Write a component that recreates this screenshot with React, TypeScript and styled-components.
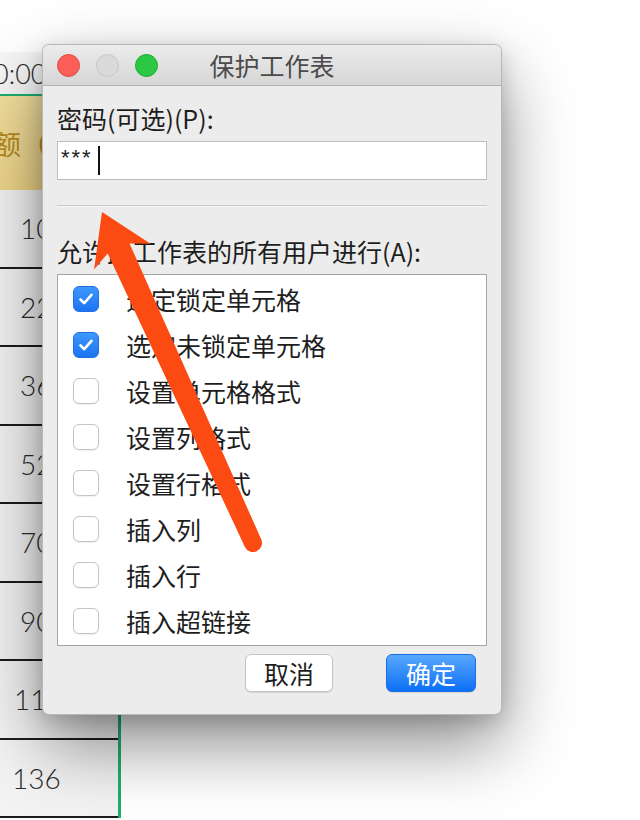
import React from 'react';
import styled, { createGlobalStyle } from 'styled-components';

const GlobalStyle = createGlobalStyle`
  html, body {
    margin: 0;
    padding: 0;
    background: #fff;
  }
  body {
    width: 640px;
    height: 820px;
    overflow: hidden;
    font-family: "Noto Sans CJK SC", "Noto Sans", sans-serif;
  }
`;

const Scene = styled.div`
  position: relative;
  width: 640px;
  height: 820px;
  overflow: hidden;
  background: #fff;
`;

// ---- spreadsheet column behind the dialog ----

const Sheet = styled.div`
  width: 121px;
  padding-top: 52px;
  display: flex;
  flex-direction: column;
  font-family: Lato, "Noto Sans CJK SC", sans-serif;
  font-weight: 300;
  color: #2b2b2b;
`;

const TimeCell = styled.div`
  height: 42px;
  display: flex;
  align-items: center;
  font-size: 27px;
  text-indent: -7px;
  background: #f6f6f6;
  overflow: hidden;
  white-space: nowrap;
`;

const SheetBody = styled.div`
  border-top: 2px solid #1fae72;
  border-right: 3px solid #1fae72;
  display: flex;
  flex-direction: column;
`;

const HeaderCell = styled.div`
  height: 94px;
  display: flex;
  align-items: center;
  background: linear-gradient(#f4e09f, #eed589);
  color: #b88a1e;
  font-family: "Noto Sans CJK SC", sans-serif;
  font-weight: 400;
  font-size: 27px;
  text-indent: -33px;
  overflow: hidden;
  white-space: nowrap;
`;

const NumberCell = styled.div<{ $indent: number }>`
  height: 76.5px;
  border-bottom: 2px solid #1c1c1c;
  display: flex;
  align-items: center;
  padding-left: ${({ $indent }) => $indent}px;
  background: #f3f3f3;
  font-size: 28px;
  overflow: hidden;
  white-space: nowrap;
`;

// ---- dialog window ----

const DialogWindow = styled.div`
  position: absolute;
  left: 42px;
  top: 44px;
  width: 460px;
  box-sizing: border-box;
  background: #ececec;
  border: 1px solid rgba(0, 0, 0, 0.22);
  border-radius: 7px;
  box-shadow: 0 30px 70px rgba(0, 0, 0, 0.45), 0 6px 20px rgba(0, 0, 0, 0.16);
  overflow: hidden;
  z-index: 2;
  color: #1e1e1e;
`;

const TitleBar = styled.div`
  position: relative;
  height: 40px;
  display: flex;
  align-items: center;
  justify-content: center;
  background: linear-gradient(#ececec, #d6d6d6);
  border-bottom: 1px solid #b3b3b3;
`;

const Lights = styled.div`
  position: absolute;
  left: 14px;
  top: 9px;
  display: flex;
  gap: 16px;
`;

const Light = styled.span<{ $fill: string; $edge: string }>`
  width: 23px;
  height: 23px;
  box-sizing: border-box;
  border-radius: 50%;
  background: ${({ $fill }) => $fill};
  border: 1px solid ${({ $edge }) => $edge};
`;

const Title = styled.div`
  font-size: 25px;
  line-height: 30px;
  color: #4b4b4b;
`;

const Body = styled.div`
  display: flex;
  flex-direction: column;
  padding: 0 14px 22px 14px;
`;

const Label = styled.div<{ $gap: number }>`
  margin-top: ${({ $gap }) => $gap}px;
  font-size: 25px;
  line-height: 30px;
  white-space: nowrap;
`;

const PasswordField = styled.div`
  margin-top: 8px;
  height: 39px;
  box-sizing: border-box;
  background: #fff;
  border: 1px solid #bdbdbd;
  display: flex;
  align-items: center;
  padding-left: 3px;
  font-family: "Liberation Sans", Arial, sans-serif;
  font-size: 22px;
  color: #222;
`;

const Masked = styled.span`
  letter-spacing: 2px;
  position: relative;
  top: -3px;
`;

const Caret = styled.span`
  width: 2px;
  height: 29px;
  margin-left: 5px;
  background: #111;
`;

const Separator = styled.div`
  margin-top: 25px;
  height: 1px;
  background: #c8c8c8;
  border-bottom: 1px solid #f7f7f7;
`;

const ListBox = styled.div`
  margin-top: 8px;
  height: 372px;
  box-sizing: border-box;
  background: #fff;
  border: 1px solid #a4a4a4;
  padding-top: 1px;
  display: flex;
  flex-direction: column;
`;

const OptionRow = styled.div`
  height: 46px;
  flex: none;
  display: flex;
  align-items: center;
  gap: 27px;
  padding-left: 15px;
  font-size: 25px;
  color: #1e1e1e;
  white-space: nowrap;
`;

const Box = styled.span<{ $on: boolean }>`
  width: 26px;
  height: 26px;
  flex: none;
  box-sizing: border-box;
  border-radius: 6px;
  display: flex;
  align-items: center;
  justify-content: center;
  background: ${({ $on }) => ($on ? 'linear-gradient(#3f98fb, #1b74f1)' : '#fff')};
  border: 1px solid ${({ $on }) => ($on ? '#1f6fe0' : '#c3c3c3')};
  box-shadow: ${({ $on }) => ($on ? 'none' : '0 1px 1px rgba(0,0,0,0.06)')};
`;

const ButtonRow = styled.div`
  margin-top: 8px;
  display: flex;
  justify-content: flex-end;
  gap: 53px;
  padding-right: 11px;
`;

const Button = styled.button<{ $primary?: boolean }>`
  height: 38px;
  width: ${({ $primary }) => ($primary ? 90 : 88)}px;
  box-sizing: border-box;
  border-radius: 6px;
  padding: 0;
  font-family: "Noto Sans CJK SC", sans-serif;
  font-size: 25px;
  line-height: 1;
  color: ${({ $primary }) => ($primary ? '#fff' : '#1e1e1e')};
  background: ${({ $primary }) => ($primary ? 'linear-gradient(#59a8fd, #0c6ff6)' : '#fff')};
  border: 1px solid ${({ $primary }) => ($primary ? '#1a6fe6' : '#c4c4c4')};
  box-shadow: 0 1px 1px rgba(0, 0, 0, 0.1);
`;

// ---- annotation arrow ----

const ArrowLayer = styled.svg`
  position: absolute;
  left: 0;
  top: 0;
  z-index: 3;
  pointer-events: none;
`;

const rows = [
  { text: '10', indent: 20 },
  { text: '22', indent: 20 },
  { text: '36', indent: 20 },
  { text: '52', indent: 20 },
  { text: '70', indent: 20 },
  { text: '90', indent: 20 },
  { text: '11', indent: 14 },
  { text: '136', indent: 12 },
];

const options = [
  { label: '选定锁定单元格', on: true },
  { label: '选定未锁定单元格', on: true },
  { label: '设置单元格格式', on: false },
  { label: '设置列格式', on: false },
  { label: '设置行格式', on: false },
  { label: '插入列', on: false },
  { label: '插入行', on: false },
  { label: '插入超链接', on: false },
];

const Check = () => (
  <svg width="18" height="18" viewBox="0 0 18 18">
    <path d="M3.5 9.5 L7.2 13.2 L14.5 4.8" fill="none" stroke="#fff" strokeWidth="2.6" strokeLinecap="round" strokeLinejoin="round" />
  </svg>
);

const App = () => {
  return (
    <>
      <GlobalStyle />
      <Scene>
        <Sheet>
          <TimeCell>0:00</TimeCell>
          <SheetBody>
            <HeaderCell>金额（元）</HeaderCell>
            {rows.map((r) => (
              <NumberCell key={r.text} $indent={r.indent}>{r.text}</NumberCell>
            ))}
          </SheetBody>
        </Sheet>

        <DialogWindow>
          <TitleBar>
            <Lights>
              <Light $fill="#fc5f57" $edge="#e1463f" />
              <Light $fill="#dadada" $edge="#c6c6c6" />
              <Light $fill="#2bc843" $edge="#1ea935" />
            </Lights>
            <Title>保护工作表</Title>
          </TitleBar>
          <Body>
            <Label $gap={17}>密码(可选)(P):</Label>
            <PasswordField>
              <Masked>***</Masked>
              <Caret />
            </PasswordField>
            <Separator />
            <Label $gap={29}>允许此工作表的所有用户进行(A):</Label>
            <ListBox>
              {options.map((o) => (
                <OptionRow key={o.label}>
                  <Box $on={o.on}>{o.on && <Check />}</Box>
                  <span>{o.label}</span>
                </OptionRow>
              ))}
            </ListBox>
            <ButtonRow>
              <Button>取消</Button>
              <Button $primary>确定</Button>
            </ButtonRow>
          </Body>
        </DialogWindow>

        <ArrowLayer width="640" height="820" viewBox="0 0 640 820">
          <path
            d="M102 212 L150.5 243.7 L129.5 243.4 L261.3 539.5 A9 9 0 0 1 244.9 546.9 L107.7 253.4 L94.1 269.5 Z"
            fill="#fb4b12"
          />
        </ArrowLayer>
      </Scene>
    </>
  );
};

export default App;
